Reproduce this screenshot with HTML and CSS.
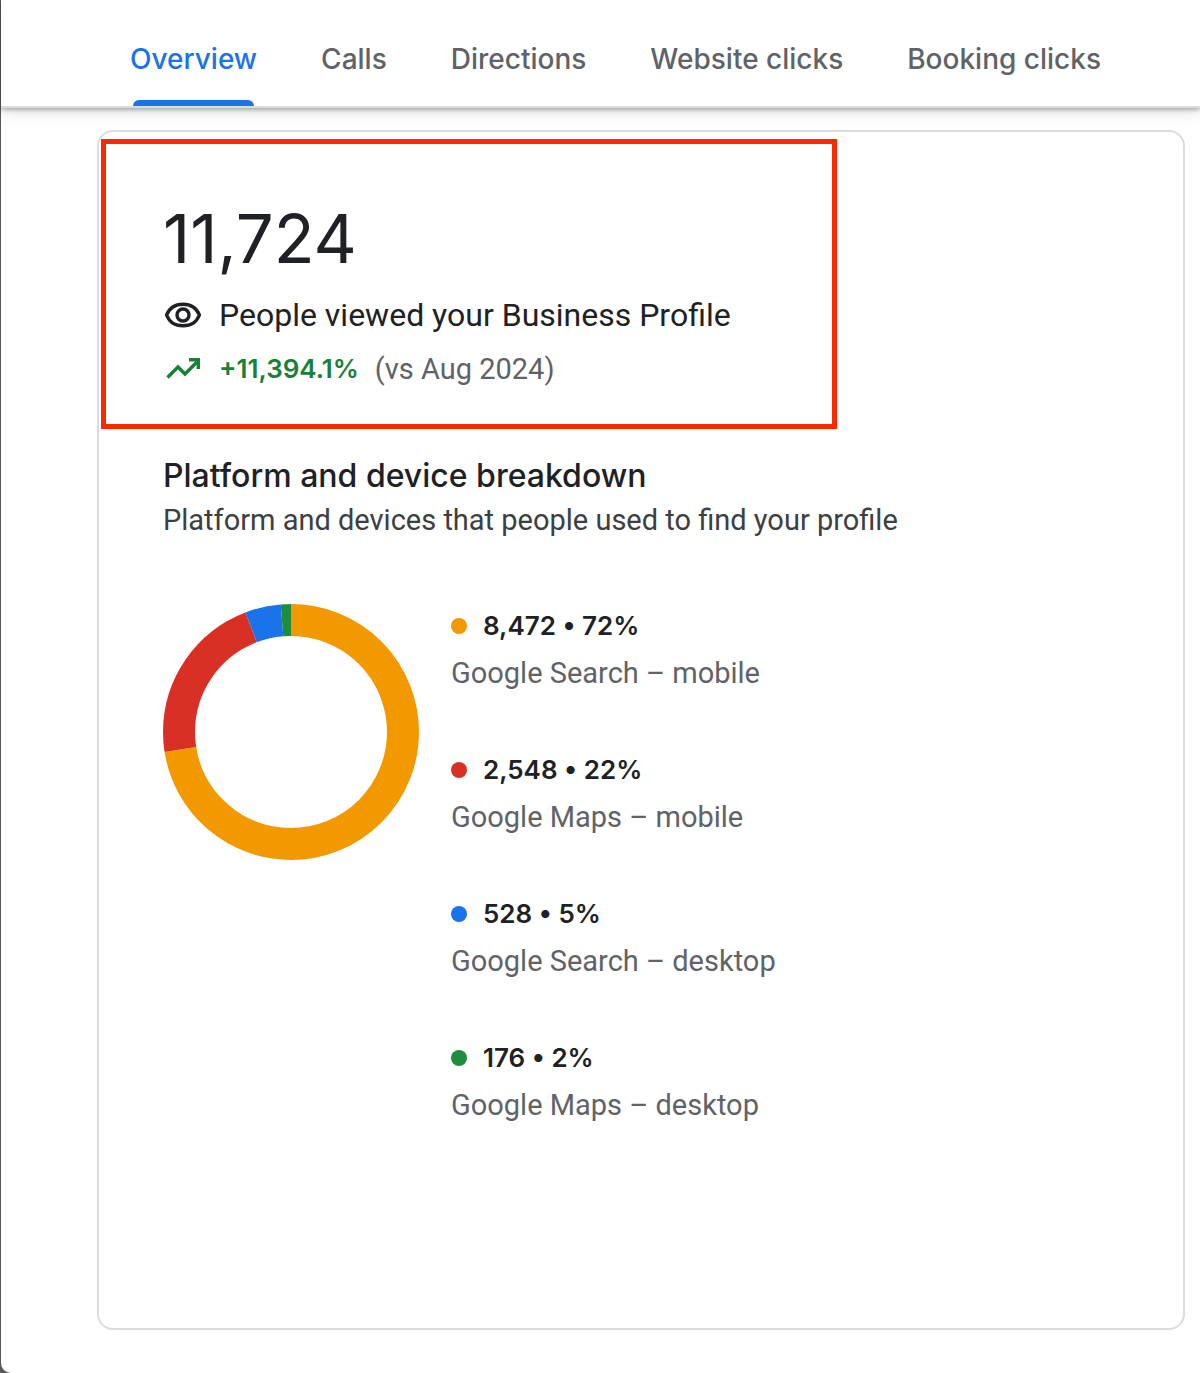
FILE: index.html
```html
<!DOCTYPE html>
<html lang="en">

<head>
  <meta charset="UTF-8">
  <meta name="viewport" content="width=device-width, initial-scale=1.0">
  <title>Business Profile performance</title>
  <link rel="stylesheet" href="styles.css">
</head>

<body>
  <div class="page">
    <nav class="tabs">
      <a class="tab active" href="#overview">Overview</a>
      <a class="tab" href="#calls">Calls</a>
      <a class="tab" href="#directions">Directions</a>
      <a class="tab" href="#website">Website clicks</a>
      <a class="tab" href="#booking">Booking clicks</a>
    </nav>

    <main class="card">
      <section class="summary">
        <h1 class="total">11,724</h1>
        <p class="metric">
          <svg class="icon" viewBox="0 0 40 40" fill="none" stroke="#202124" stroke-width="3.4">
            <path d="M3.6 20C6.3 13 12.6 9.2 20 9.2S33.7 13 36.4 20C33.7 27 27.4 30.8 20 30.8S6.3 27 3.6 20Z"/>
            <circle cx="20" cy="20" r="6"/>
          </svg>
          <span>People viewed your Business Profile</span>
        </p>
        <p class="trend">
          <svg class="icon" viewBox="0 0 40 40" fill="none" stroke="#188038" stroke-width="3.4">
            <path d="M4.5 28.5L15 18L22 25L34 13"/>
            <path d="M26 10.7H35.3V20"/>
          </svg>
          <b class="change">+11,394.1%</b>
          <span class="period">(vs Aug 2024)</span>
        </p>
      </section>

      <section class="breakdown">
        <h2>Platform and device breakdown</h2>
        <p class="subtitle">Platform and devices that people used to find your profile</p>

        <div class="chart">
          <!-- the full ring is 1000 -->
          <svg class="donut" viewBox="0 0 256 256" fill="none" stroke-width="32">
            <g transform="rotate(-90 128 128)">
              <circle cx="128" cy="128" r="112" pathLength="1000" stroke="#f29900" stroke-dasharray="725 275"/>
              <circle cx="128" cy="128" r="112" pathLength="1000" stroke="#d93025" stroke-dasharray="217 783" stroke-dashoffset="-725"/>
              <circle cx="128" cy="128" r="112" pathLength="1000" stroke="#1a73e8" stroke-dasharray="45 955" stroke-dashoffset="-942"/>
              <circle cx="128" cy="128" r="112" pathLength="1000" stroke="#1e8e3e" stroke-dasharray="13 987" stroke-dashoffset="-987"/>
            </g>
          </svg>

          <ul class="legend">
            <li>
              <b class="value orange">8,472 • 72%</b>
              <span class="label">Google Search – mobile</span>
            </li>
            <li>
              <b class="value red">2,548 • 22%</b>
              <span class="label">Google Maps – mobile</span>
            </li>
            <li>
              <b class="value blue">528 • 5%</b>
              <span class="label">Google Search – desktop</span>
            </li>
            <li>
              <b class="value green">176 • 2%</b>
              <span class="label">Google Maps – desktop</span>
            </li>
          </ul>
        </div>
      </section>
    </main>
  </div>
</body>

</html>
```
FILE: styles.css
```css
/* ---- General ---- */

:root {
  --text: #202124;
  --grey: #5f6368;
  --line: #dadce0;
  --blue: #1a73e8;
  --display: "Google Sans", Inter, sans-serif;
}

* {
  box-sizing: border-box;
}

body {
  margin: 0;
  background: #58585a;
  color: var(--text);
  font-family: Roboto, sans-serif;
  font-size: 29px;
}

h1, h2, p, ul {
  margin: 0;
  padding: 0;
}

.page {
  display: flex;
  flex-direction: column;
  min-height: 100vh;
  margin-left: 1px;
  background: #fff;
  border-bottom-left-radius: 10px;
}

/* ---- Tabs ---- */

.tabs {
  display: flex;
  height: 108px;
  padding-left: 97px;
  border-bottom: 2px solid var(--line);
  box-shadow: 0 2px 4px rgba(0, 0, 0, .28), 0 4px 16px rgba(0, 0, 0, .12);
}

.tab {
  display: flex;
  flex-direction: column;
  justify-content: space-between;
  padding: 41px 32px 0;
  color: var(--grey);
  font-family: var(--display);
  font-size: 28px;
  font-weight: 500;
  line-height: 36px;
  text-decoration: none;
  white-space: nowrap;
}

.active {
  color: var(--blue);
}

.active::after {
  content: "";
  height: 6px;
  margin: 0 3px;
  border-radius: 6px 6px 0 0;
  background: var(--blue);
}

/* ---- Card ---- */

.card {
  flex: 1;
  margin: 22px 15px 43px 96px;
  border: 2px solid var(--line);
  border-radius: 16px;
}

.summary {
  max-width: 736px;
  height: 290px;
  margin: 7px 2px 0;
  padding: 55px 57px 0;
  border: 5px solid #fa2a00;
}

.total {
  font-family: var(--display);
  font-size: 67px;
  font-weight: 400;
  line-height: 80px;
}

.metric, .trend {
  display: flex;
  align-items: center;
}

.metric {
  margin-top: 12px;
  font-size: 32px;
  line-height: 48px;
}

.trend {
  margin-top: 8px;
  line-height: 44px;
}

.icon {
  width: 40px;
  height: 40px;
  margin-right: 16px;
}

.change {
  margin-right: 16px;
  color: #188038;
  font-family: var(--display);
  font-size: 26px;
  font-weight: 600;
}

.period {
  color: var(--grey);
}

/* ---- Breakdown ---- */

.breakdown {
  padding: 27px 64px 0;
}

h2 {
  font-family: var(--display);
  font-size: 32px;
  font-weight: 500;
  line-height: 40px;
}

.subtitle {
  margin-top: 6px;
  color: #3c4043;
  line-height: 36px;
}

.chart {
  display: flex;
  gap: 32px;
  align-items: flex-start;
  margin-top: 66px;
}

.donut {
  flex: none;
  width: 256px;
  height: 256px;
}

.legend {
  display: grid;
  gap: 56px;
  list-style: none;
  line-height: 44px;
}

.legend li {
  height: 88px;
}

.value {
  display: flex;
  align-items: center;
  gap: 16px;
  font-family: var(--display);
  font-size: 26px;
  font-weight: 600;
}

.value::before {
  content: "";
  width: 16px;
  height: 16px;
  border-radius: 50%;
  background: currentColor;
}

.orange::before { background: #f29900; }
.red::before { background: #d93025; }
.blue::before { background: #1a73e8; }
.green::before { background: #1e8e3e; }

.label {
  display: block;
  margin-top: 3px;
  color: var(--grey);
}
```
